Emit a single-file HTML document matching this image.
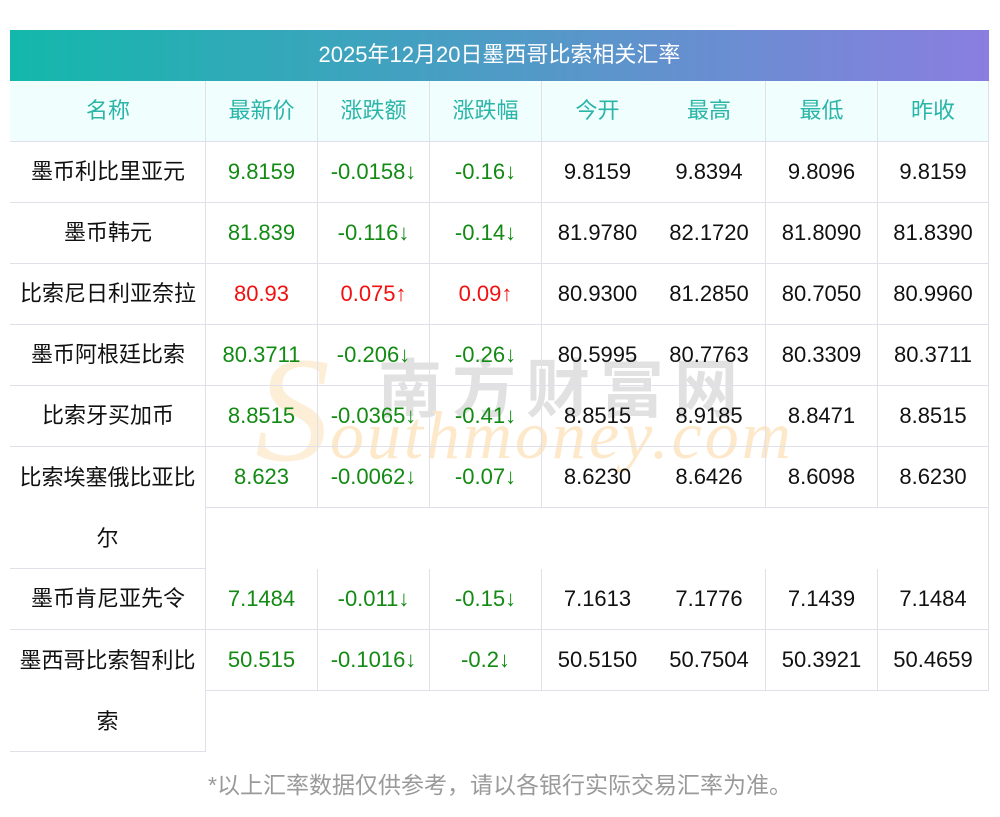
<!DOCTYPE html>
<html><head><meta charset="utf-8"><style>
body{margin:0;width:1000px;height:817px;background:#fff;position:relative;overflow:hidden;font-family:"Liberation Sans","Noto Sans CJK SC",sans-serif}
.t{position:absolute;left:10px;top:30px;width:979px;height:51px;background:linear-gradient(90deg,#13b8ab,#8a7ee0);color:#fff;font-size:22px;line-height:49px;text-align:center}
.c{position:absolute;box-sizing:border-box;text-align:center;font-size:22px;line-height:59px;color:#111;padding:0 8px}
.h{background:#f0fefe;color:#2ab5a8}
.g{color:#138a13}.r{color:#f01010}
.wm1{position:absolute;left:378px;top:345px;font-size:64px;color:#dcdcdc;letter-spacing:10px;font-weight:bold;opacity:.85;font-family:"Noto Sans CJK SC",sans-serif;line-height:80px}
.wm2{position:absolute;left:330px;top:395px;font-size:68px;color:#fde6c4;font-style:italic;font-family:"Liberation Serif",serif;letter-spacing:3px;line-height:80px;opacity:.9}
.wmS{position:absolute;left:255px;top:335px;font-size:150px;color:#fdeed8;font-style:italic;font-family:"Liberation Serif",serif;line-height:150px}
.f{position:absolute;left:0;width:1000px;top:770px;text-align:center;color:#9a9a9a;font-size:23px;line-height:30px}
</style></head><body>
<div class="wmS">S</div>
<div class="wm1">南方财富网</div>
<div class="wm2">outhmoney.com</div>
<div class="t">2025年12月20日墨西哥比索相关汇率</div>
<div id="tb"></div>
<div class="f">*以上汇率数据仅供参考，请以各银行实际交易汇率为准。</div>
<script>
var L=[10,205,317,429,541,653,765,877,989];
var B='#e0e0ea';
var rows=[
["名称","最新价","涨跌额","涨跌幅","今开","最高","最低","昨收"],
["墨币利比里亚元","9.8159","-0.0158↓","-0.16↓","9.8159","9.8394","9.8096","9.8159"],
["墨币韩元","81.839","-0.116↓","-0.14↓","81.9780","82.1720","81.8090","81.8390"],
["比索尼日利亚奈拉","80.93","0.075↑","0.09↑","80.9300","81.2850","80.7050","80.9960"],
["墨币阿根廷比索","80.3711","-0.206↓","-0.26↓","80.5995","80.7763","80.3309","80.3711"],
["比索牙买加币","8.8515","-0.0365↓","-0.41↓","8.8515","8.9185","8.8471","8.8515"],
["比索埃塞俄比亚比尔","8.623","-0.0062↓","-0.07↓","8.6230","8.6426","8.6098","8.6230"],
["墨币肯尼亚先令","7.1484","-0.011↓","-0.15↓","7.1613","7.1776","7.1439","7.1484"],
["墨西哥比索智利比索","50.515","-0.1016↓","-0.2↓","50.5150","50.7504","50.3921","50.4659"]];
var tops=[81,142,203,264,325,386,447,569,630];
var h='';
function cell(x,y,w,hh,txt,cls,st){h+='<div class="c '+cls+'" style="left:'+x+'px;top:'+y+'px;width:'+w+'px;height:'+hh+'px;'+st+'">'+txt+'</div>';}
for(var i=0;i<rows.length;i++){
 var y=tops[i],two=(i==6||i==8);
 for(var j=0;j<8;j++){
  var cls=i==0?'h':'';
  if(i>0&&(j==1||j==2||j==3)) cls=(i==3)?'r':'g';
  var x=L[j],w=L[j+1]-L[j];
  var st='border-bottom:1px solid '+B+';';
  if(j>0 && j!=5) st+='border-left:1px solid '+B+';';
  if(j==7) st+='border-right:1px solid '+B+';';
  if(j==0){
   if(two){cell(x,y,w+1,122,rows[i][j],cls,st+'border-right:1px solid '+B+';line-height:61px;');}
   else cell(x,y,w+1,61,rows[i][j],cls,st);
  } else cell(x,y,w,61,rows[i][j],cls,st);
 }
}
h+='<div style="position:absolute;left:205px;top:508px;width:784px;height:61px;border-left:1px solid '+B+';border-right:1px solid '+B+';box-sizing:border-box"></div>';
document.getElementById('tb').innerHTML=h;
</script>
</body></html>
